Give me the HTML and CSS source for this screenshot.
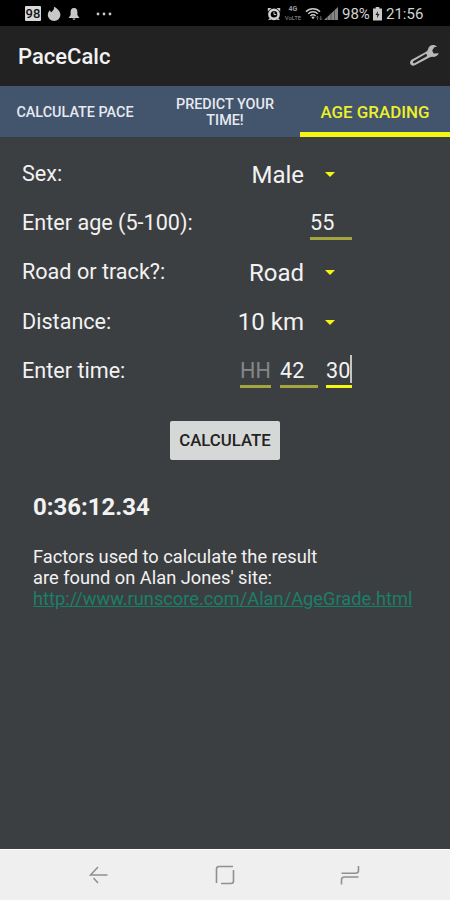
FILE: index.html
```html
<!DOCTYPE html>
<html lang="en">
	<head>
		<meta charset="utf-8" />
		<title>PaceCalc</title>
		<link rel="stylesheet" href="styles.css">
	</head>
	<body>
		<div class="status">
			<div class="status_left">
				<span class="badge">98</span>
				<svg class="flame" width="14" height="16" viewBox="0 0 14 16"><path d="M5.5 4.8C7 3.8 7.3 2.2 6.8 0.8C10 2 13.4 5.3 13.4 9A6.3 6 0 0 1 0.8 9C0.8 6.8 1.8 5.2 3 4.2C3.2 5.2 3.6 5.8 4.3 6.2C4.9 5.9 5.3 5.4 5.5 4.8Z"/></svg>
				<svg class="bell" width="12" height="14" viewBox="0 0 12 14"><path d="M6 1C8.6 1 9.4 3 9.4 5V8L11.4 11H0.6L2.6 8V5C2.6 3 3.4 1 6 1Z"/><path d="M4.6 11.5H7.4C7.4 13.2 4.6 13.2 4.6 11.5Z"/></svg>
				<svg class="more" width="16" height="4" viewBox="0 0 16 4"><circle cx="2" cy="2" r="1.4"/><circle cx="8" cy="2" r="1.4"/><circle cx="14" cy="2" r="1.4"/></svg>
			</div>
			<div class="status_right">
				<svg width="14" height="14" viewBox="0 0 14 14"><circle cx="7" cy="7.3" r="4.6" fill="none" stroke="#d2d2d2" stroke-width="2.6"/><path d="M0.8 4.6V1H4.6ZM9.4 1H13.2V4.6ZM1 13L3.6 10.4L4.8 11.6L3.4 13ZM13 13L10.4 10.4L9.2 11.6L10.6 13Z"/><path d="M7 4.8V7.6H9.2" fill="none" stroke="#d2d2d2"/></svg>
				<div class="volte"><b>4G</b><span>VoLTE</span></div>
				<svg class="wifi" width="18" height="14" viewBox="0 0 18 14"><g fill="none" stroke="#c8c8c8" stroke-width="1.4"><path d="M1 4.7C4.6 0.7 11.4 0.7 15 4.7"/><path d="M3.2 6.9C5.6 4.1 10.4 4.1 12.8 6.9"/><path d="M5.4 9C6.8 7.4 9.2 7.4 10.6 9"/></g><path d="M6.3 10.3Q8 8.8 9.7 10.3L8 12.3Z"/><path d="M12.4 13V9.3M11.2 10.5L12.4 9.2L13.6 10.5M15.8 9V12.7M14.6 11.5L15.8 12.8L17 11.5" fill="none" stroke="#777" stroke-width="0.8"/></svg>
				<svg class="signal" width="14" height="13" viewBox="0 0 14 13"><path d="M0 13L14 0V13Z" fill="#858585"/><path d="M3.5 9.8V13M7 6.5V13M10.5 3.2V13" stroke="#444" stroke-width="0.7"/></svg>
				<span class="percent">98%</span>
				<svg class="battery" width="9" height="14" viewBox="0 0 9 14"><path d="M2.7 0H6.3V1.6H9V13.4H0V1.6H2.7Z"/><path d="M5 4L2.5 8H4.2L4 11.3L6.5 7H4.8Z" fill="#222"/></svg>
				<span class="clock">21:56</span>
			</div>
		</div>
		<header class="bar">
			<h1>PaceCalc</h1>
			<svg class="wrench" width="32" height="26" viewBox="0 0 32 26"><path d="M29.2 3.6C26 0.7 20.9 2 20.2 5.8C20 7 19.3 8 18.1 8.7L4 16.4C0.2 18.8 2.7 24.1 6.8 22.3L21.5 14.5C22.8 13.8 24 13.8 25.3 13.9C28 14 30 12.5 30.7 10.3L25.6 10.4L24.2 7.4L26.3 4.3Z" fill="#b9b9b9"/><path d="M6.2 19L17.8 12.3" stroke="#222" stroke-width="2.5" stroke-linecap="round"/></svg>
		</header>
		<nav class="tabs">
			<a>CALCULATE PACE</a>
			<a>PREDICT YOUR<br>TIME!</a>
			<a class="active">AGE GRADING</a>
		</nav>
		<main class="content">
			<div class="row">
				<label>Sex:</label>
				<div class="select">Male<i></i></div>
			</div>
			<div class="row">
				<label>Enter age (5-100):</label>
				<span class="field age">55</span>
			</div>
			<div class="row">
				<label>Road or track?:</label>
				<div class="select">Road<i></i></div>
			</div>
			<div class="row">
				<label>Distance:</label>
				<div class="select">10 km<i></i></div>
			</div>
			<div class="row">
				<label>Enter time:</label>
				<div class="time">
					<span class="field hh">HH</span>
					<span class="field mm">42</span>
					<span class="field ss">30</span>
				</div>
			</div>
			<button class="calc">CALCULATE</button>
			<div class="result">0:36:12.34</div>
			<p class="note">Factors used to calculate the result<br>are found on Alan Jones' site:<br><a href="#">http://www.runscore.com/Alan/AgeGrade.html</a></p>
		</main>
		<footer class="keys">
			<svg width="20" height="20" viewBox="0 0 20 20"><path d="M18.5 10H1.5L9 2M4.5 13L9 18"/></svg>
			<svg width="20" height="20" viewBox="0 0 20 20"><path d="M1.5 18V4Q1.5 1.5 4 1.5H18M18.5 5V16Q18.5 18.5 16 18.5H6"/></svg>
			<svg width="20" height="20" viewBox="0 0 20 20"><path d="M1.5 8.3H15.5Q18.5 8.3 18.5 5.5V1M18.5 12H4.5Q1.5 12 1.5 15V19.5"/></svg>
		</footer>
	</body>
</html>
```
FILE: styles.css
```css
*{box-sizing: border-box;}
body,h1,p{margin: 0;padding: 0;}
body{width: 450px;height: 900px;display: flex;flex-direction: column;background: #3c3f41;color: #f2f2f2;font-family: Roboto,sans-serif;overflow: hidden;}
svg{display: block;flex: none;}

.status{height: 26px;flex: none;background: #000;display: flex;justify-content: space-between;padding: 1px 27px 0 25px;color: #d2d2d2;}
.status svg{fill: #c8c8c8;}
.status_left,.status_right{display: flex;align-items: center;}
.badge{width: 16px;height: 15px;background: #d8d8d8;color: #111;border-radius: 1px;font-size: 13px;line-height: 15px;text-align: center;font-weight: 500;}
.flame{margin-left: 6px;}
.bell{margin-left: 7px;}
.more{margin-left: 16px;}
.volte{width: 18px;margin-left: 3px;display: flex;flex-direction: column;align-items: center;font-size: 6px;line-height: 8px;color: #999;}
.volte b{font-size: 7px;line-height: 9px;}
.wifi{margin-left: 3px;}
.signal{margin-left: 1px;}
.percent{margin-left: 4px;font-size: 15px;width: 27px;}
.battery{margin-left: 4px;}
.clock{margin-left: 4px;font-size: 15px;width: 37px;}

.bar{height: 60px;flex: none;background: #222;display: flex;align-items: center;justify-content: space-between;padding: 0 10px 0 18px;}
.bar h1{font-size: 22px;font-weight: 500;line-height: 26px;padding-top: 2px;}

.tabs{height: 51px;flex: none;display: flex;background: #43546d;}
.tabs a{width: 150px;display: flex;align-items: center;justify-content: center;text-align: center;font-size: 14.4px;line-height: 16px;font-weight: 500;color: #e6eaef;padding-top: 2px;}
.tabs a.active{font-size: 16.9px;color: #ecf02a;border-bottom: 5px solid #f6f613;padding-top: 5px;}

.content{flex: 1;padding: 12px 98px 0 22px;}
.row{height: 49.2px;display: flex;align-items: center;justify-content: space-between;font-size: 21.6px;}
.select{display: flex;align-items: center;font-size: 24px;padding: 2px 17px 0 0;}
.select i{margin-left: 21px;border: 5.5px solid transparent;border-top-color: #f6f613;border-bottom: 0;}
.field{height: 33px;line-height: 31px;border-bottom: 3px solid #a5a540;}
.age{width: 42px;margin-top: 1px;}
.time{display: flex;margin-top: 3px;}
.hh{width: 31px;margin-right: 9px;color: #858788;}
.mm{width: 38px;margin-right: 8px;}
.ss{width: 26px;border-bottom-color: #f6f613;position: relative;}
/* text cursor */
.ss::after{content: "";position: absolute;right: 0;top: 0;width: 2px;height: 28px;background: #c4c6c6;}
.calc{display: block;width: 110px;height: 39px;margin: 26px 0 0 148px;padding: 0;border: 0;border-radius: 2px;background: #d6d8d8;color: #222;font-family: inherit;font-size: 16.8px;font-weight: 500;}
.result{margin: 32px 0 0 11px;font-size: 24px;line-height: 30px;font-weight: 700;}
.note{margin: 25px 0 0 11px;font-size: 18.25px;line-height: 20.8px;white-space: nowrap;}
.note a{color: #188068;}

.keys{height: 51px;flex: none;background: #efefef;border-top: 1px solid #fff;display: flex;align-items: center;justify-content: space-between;padding: 0 90px 0 89px;}
.keys path{fill: none;stroke: #909090;stroke-width: 1.6;}
```
